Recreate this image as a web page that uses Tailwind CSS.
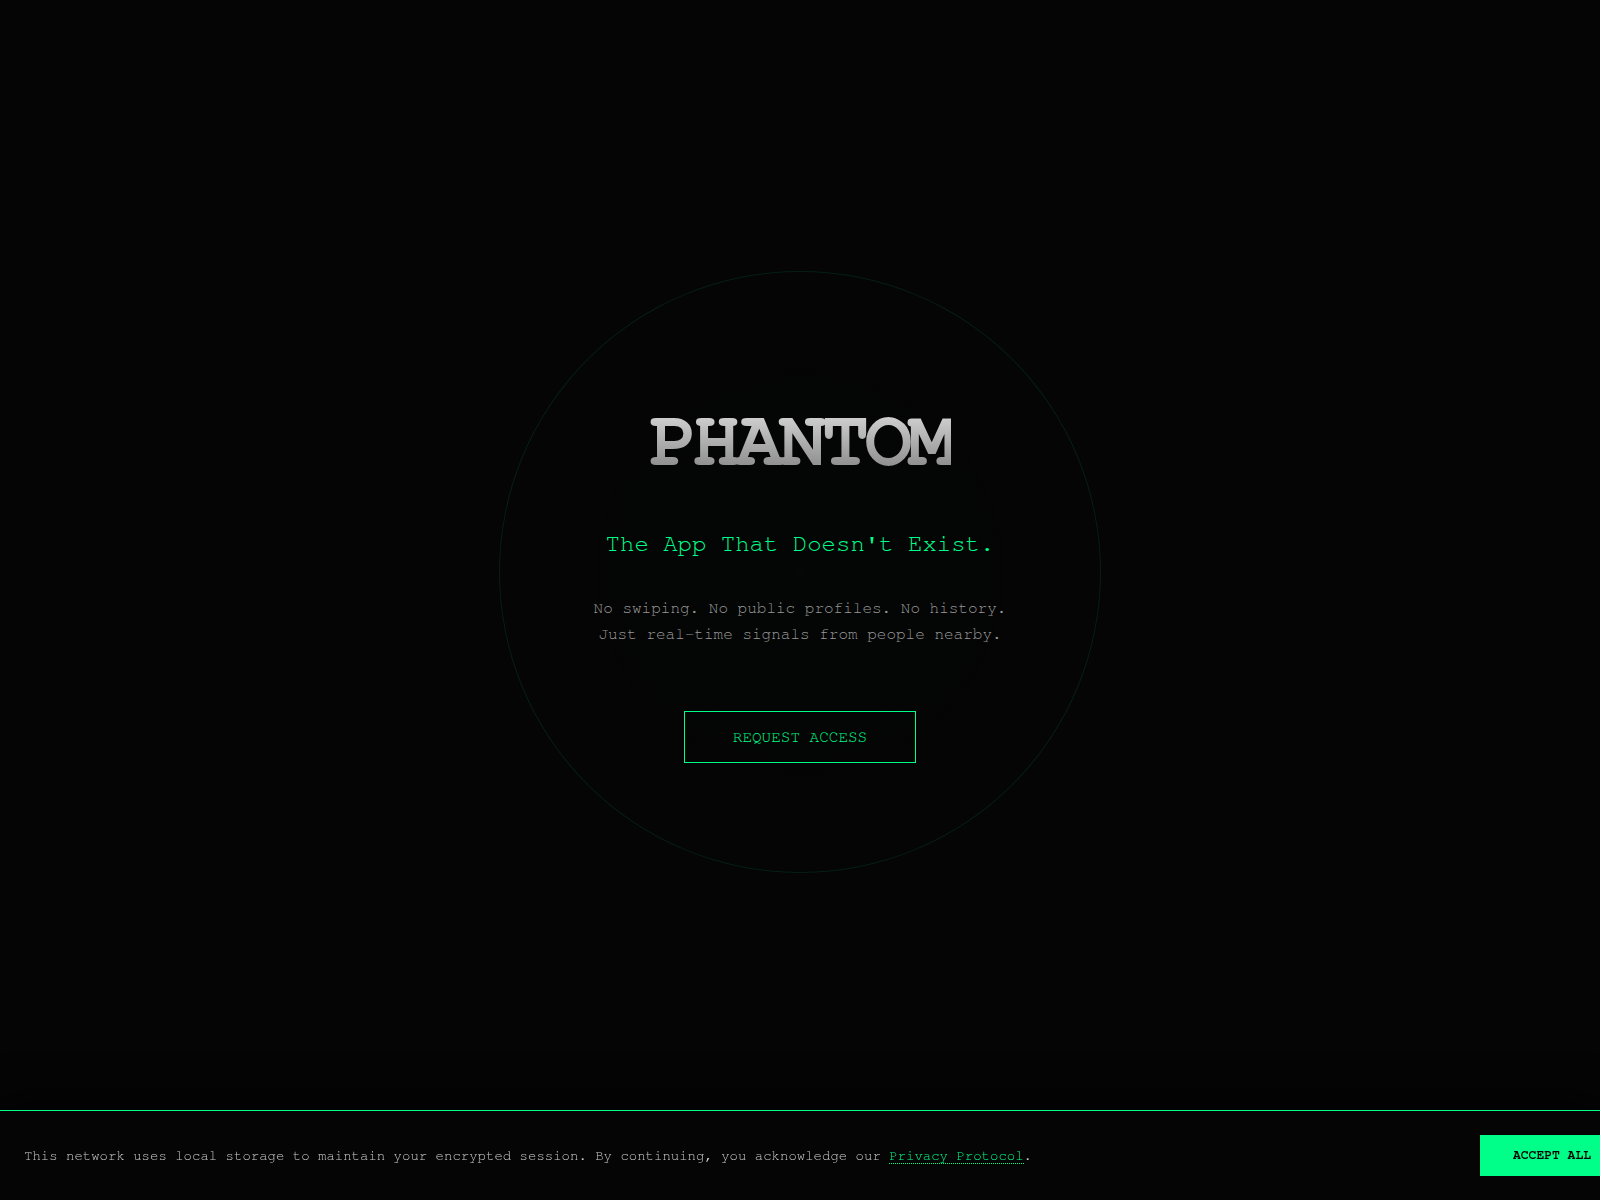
<!DOCTYPE html>
<html lang="en">

<head>
  <meta charset="UTF-8">
  <meta name="viewport" content="width=device-width, initial-scale=1.0">
  <title>PHANTOM</title>
  <script src="https://cdn.jsdelivr.net/npm/@tailwindcss/browser@4"></script>
</head>

<body class="bg-[#050505] font-[FreeMono,'Courier_New','Liberation_Mono',monospace] overflow-hidden">
  <main class="relative flex flex-col items-center justify-center min-h-screen px-6 pb-14 text-center">
    <!-- Radar ring -->
    <div
      class="absolute size-[602px] rounded-full border border-[#00ff88]/10 bg-radial from-[#00ff88]/1 to-transparent to-60%">
    </div>
    <div class="relative flex flex-col items-center">
      <h1
        class="text-[80px] leading-[120px] tracking-[-5px] font-bold bg-linear-to-b from-white to-[#666666] bg-clip-text text-transparent">
        PHANTOM</h1>
      <p class="mt-6 text-2xl leading-[38px] text-[#00ff88]">The App That Doesn't Exist.</p>
      <p class="mt-8 text-base leading-[26px] text-[#999999]">No swiping. No public profiles. No history.<br>Just
        real-time signals from people nearby.</p>
      <button type="button" class="mt-16 h-[52px] px-12 border border-[#00ff88] text-base text-[#00ff88]">
        REQUEST ACCESS
      </button>
    </div>
  </main>

  <!-- Cookie notice -->
  <div class="fixed bottom-0 left-0 w-full border-t border-[#00ff88] bg-[#050505] shadow-[0_-10px_40px_#000000cc]">
    <div class="flex items-center justify-between py-6 pl-6 -mr-6">
      <p class="text-sm text-[#cccccc]">
        This network uses local storage to maintain your encrypted session. By continuing, you acknowledge our
        <a href="#" class="text-[#00ff88] border-b border-dotted border-[#00ff88]">Privacy Protocol</a>.
      </p>
      <button type="button" class="shrink-0 h-[41px] w-36 bg-[#00ff88] text-[13px] font-bold text-[#050505]">
        ACCEPT ALL
      </button>
    </div>
  </div>
</body>

</html>
